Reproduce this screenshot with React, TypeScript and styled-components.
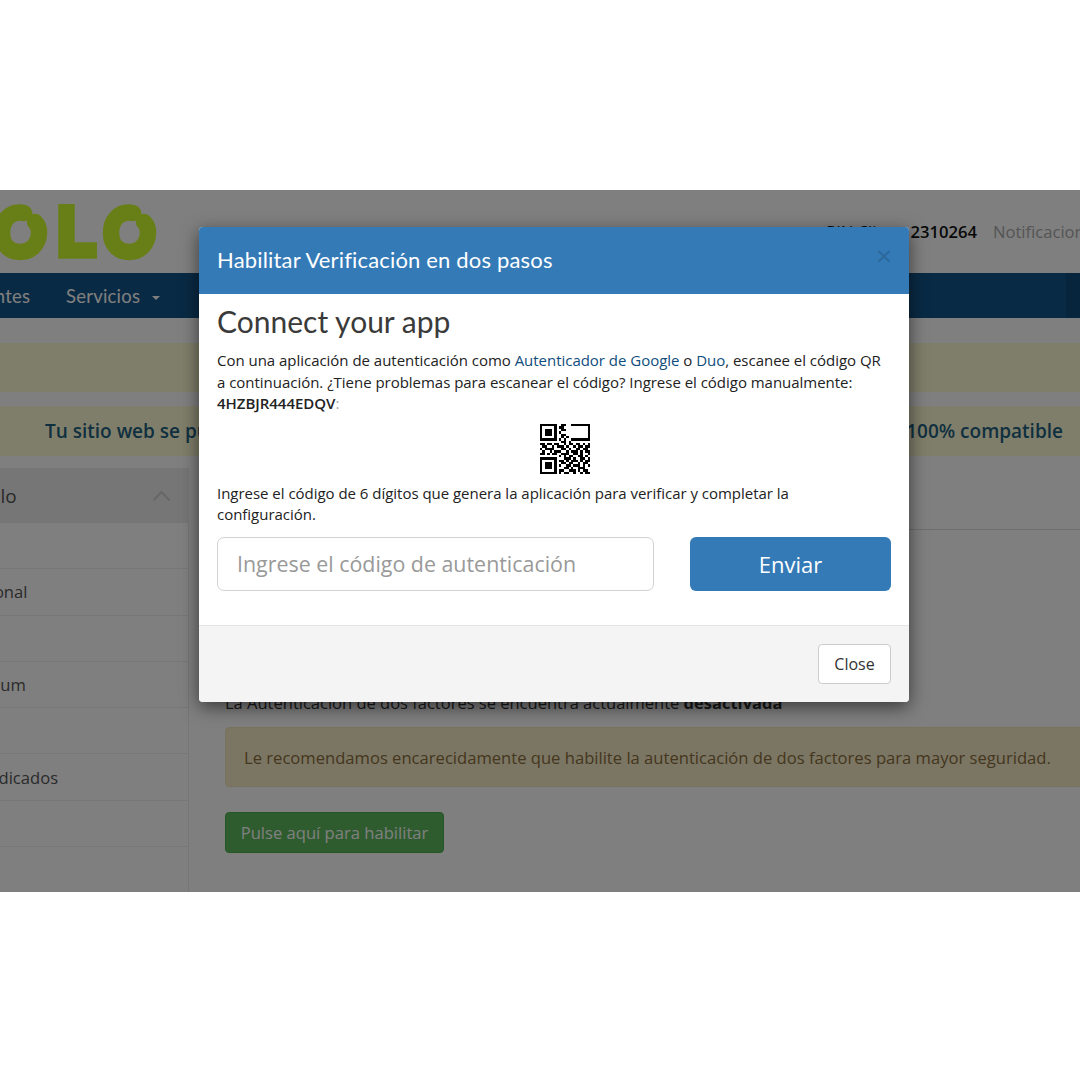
import React from "react";
import styled, { createGlobalStyle } from "styled-components";

const GlobalStyle = createGlobalStyle`
  html, body {
    margin: 0;
    padding: 0;
    background: #fff;
  }
  * {
    box-sizing: border-box;
  }
  body {
    font-family: "Open Sans", "Liberation Sans", sans-serif;
    color: #333;
    overflow: hidden;
  }
`;

const QR_ROWS = [
  "111111100110011111111",
  "100000101100000000001",
  "101110100110000000001",
  "101110101000000000001",
  "101110100110000000001",
  "100000100101000000001",
  "111111101010011111111",
  "000000000110100000000",
  "110110110010110110101",
  "011001011101001011011",
  "101111000110100110110",
  "010010111001011101011",
  "110101100111001101001",
  "000000001010110011010",
  "111111100011101001101",
  "100000101101011101011",
  "101110100110110010110",
  "101110101001101110101",
  "101110100011010011100",
  "100000101100111010110",
  "111111101011001001011",
];

const MENU = [
  "Mi Cuenta",
  "Servidor Personal",
  "Dominios",
  "Hosting Premium",
  "Correo",
  "Servidores Dedicados",
  "Soporte",
];

const Logo = () => (
  <LogoSvg viewBox="0 0 160 64" aria-label="Logo">
    <g fill="none" stroke="#d0ff30" strokeWidth="16.5" strokeLinecap="round">
      <path d="M24 13 C9 10 2 22 2 33 C2 46 11 52 20 52 C31 52 39 44 39 32 C39 27 37 24 35 22" />
      <path d="M66.5 4 V50.5 H97" strokeLinecap="butt" />
      <path d="M133 13 C118 10 111 22 111 33 C111 46 120 52 129 52 C140 52 148 44 148 32 C148 27 146 24 144 22" />
    </g>
  </LogoSvg>
);

const QrCode = () => (
  <QrSvg viewBox="0 0 21 21" shapeRendering="crispEdges" aria-label="QR">
    {QR_ROWS.map((row, y) =>
      row
        .split("")
        .map((cell, x) =>
          cell === "1" ? <rect key={`${x}-${y}`} x={x} y={y} width="1" height="1" fill="#000" /> : null
        )
    )}
  </QrSvg>
);

export default function App() {
  return (
    <>
      <GlobalStyle />
      <Frame>
        <Page>
          <Header>
            <Logo />
            <HeaderInfo>
              <PinLabel>
                PIN Client: <strong>2310264</strong>
              </PinLabel>
              <Muted>Notificaciones</Muted>
            </HeaderInfo>
          </Header>
          <Nav>
            <NavItem>Clientes</NavItem>
            <NavItem>
              Servicios <Caret />
            </NavItem>
            <NavEnd />
          </Nav>
          <EmptyBanner />
          <Banner>
            <span>Tu sitio web se puede</span>
            <span>100% compatible</span>
          </Banner>
          <Columns>
            <Sidebar>
              <SidebarHeader>
                <span>Panel del Colo</span>
                <Chevron viewBox="0 0 20 12">
                  <path d="M1.5 10.5 L10 2 L18.5 10.5" />
                </Chevron>
              </SidebarHeader>
              {MENU.map((item) => (
                <SidebarRow key={item}>{item}</SidebarRow>
              ))}
            </Sidebar>
            <Main>
              <MainTitle>Seguridad de la cuenta</MainTitle>
              <StatusText>
                La Autenticación de dos factores se encuentra actualmente <strong>desactivada</strong>
              </StatusText>
              <WarningBox>
                Le recomendamos encarecidamente que habilite la autenticación de dos factores para mayor seguridad.
              </WarningBox>
              <EnableButton>Pulse aquí para habilitar</EnableButton>
            </Main>
          </Columns>
        </Page>
        <Backdrop />
        <Modal>
          <ModalHeader>
            <ModalTitle>Habilitar Verificación en dos pasos</ModalTitle>
            <CloseX>×</CloseX>
          </ModalHeader>
          <ModalBody>
            <Heading>Connect your app</Heading>
            <Paragraph>
              Con una aplicación de autenticación como <BodyLink>Autenticador de Google</BodyLink> o{" "}
              <BodyLink>Duo</BodyLink>, escanee el código QR a continuación. ¿Tiene problemas para escanear el código?
              Ingrese el código manualmente: <Code>4HZBJR444EDQV</Code>
              <Faint>:</Faint>
            </Paragraph>
            <QrWrap>
              <QrCode />
            </QrWrap>
            <Paragraph>
              Ingrese el código de 6 dígitos que genera la aplicación para verificar y completar la configuración.
            </Paragraph>
            <CodeForm>
              <CodeInput placeholder="Ingrese el código de autenticación" />
              <SubmitButton>Enviar</SubmitButton>
            </CodeForm>
          </ModalBody>
          <ModalFooter>
            <CloseButton>Close</CloseButton>
          </ModalFooter>
        </Modal>
      </Frame>
    </>
  );
}

const Frame = styled.div`
  position: relative;
  height: 702px;
  margin-top: 190px;
  overflow: hidden;
  background: #fff;
`;

const Page = styled.div`
  width: 1320px;
  margin-left: -120px;
`;

const Header = styled.header`
  display: flex;
  align-items: center;
  justify-content: space-between;
  height: 83px;
  padding: 0 98px 0 120px;
`;

const LogoSvg = styled.svg`
  width: 160px;
  height: 64px;
  overflow: visible;
`;

const HeaderInfo = styled.div`
  display: flex;
  gap: 16px;
  font-size: 16.6px;
  color: #111;
`;

const PinLabel = styled.span`
  strong {
    font-weight: 600;
  }
`;

const Muted = styled.span`
  color: #aaa;
`;

const Nav = styled.nav`
  display: flex;
  align-items: center;
  gap: 36px;
  height: 45px;
  padding-left: 83px;
  background: #125488;
  position: relative;
`;

const NavItem = styled.span`
  font-family: Lato, "Open Sans", sans-serif;
  font-size: 18.5px;
  letter-spacing: 0.2px;
  color: #fff;
`;

const Caret = styled.i`
  display: inline-block;
  width: 0;
  height: 0;
  margin-left: 7px;
  vertical-align: middle;
  border-top: 4px solid #fff;
  border-left: 4.5px solid transparent;
  border-right: 4.5px solid transparent;
`;

const NavEnd = styled.div`
  position: absolute;
  top: 0;
  bottom: 0;
  left: 1186px;
  right: 0;
  background: #0f4d7d;
`;

const EmptyBanner = styled.div`
  height: 49px;
  margin-top: 25px;
  background: #fffdd4;
`;

const Banner = styled.div`
  display: flex;
  justify-content: space-between;
  align-items: center;
  height: 50px;
  margin-top: 14px;
  padding: 0 137px 0 165px;
  background: #fffdd4;
  color: #1f6080;
  font-size: 19px;
  font-weight: 600;
`;

const Columns = styled.div`
  display: flex;
  margin-top: 12px;
`;

const Sidebar = styled.aside`
  flex: 0 0 309px;
  height: 424px;
  border-right: 1px solid #ececec;
`;

const SidebarHeader = styled.div`
  display: flex;
  align-items: center;
  justify-content: space-between;
  height: 55px;
  padding: 0 17px 0 11px;
  background: #ececec;
  color: #555;
  font-size: 19px;
`;

const Chevron = styled.svg`
  width: 19px;
  height: 12px;
  fill: none;
  stroke: #ccc;
  stroke-width: 2;
`;

const SidebarRow = styled.div`
  display: flex;
  align-items: center;
  height: 46.3px;
  padding-left: 11px;
  border-bottom: 1px solid #eee;
  font-size: 16.6px;
  color: #555;
`;

const Main = styled.main`
  flex: 1;
  padding-left: 36px;
`;

const MainTitle = styled.h2`
  height: 62px;
  margin: 0;
  border-bottom: 1px solid #ddd;
  font-size: 24px;
  font-weight: 400;
`;

const StatusText = styled.p`
  margin: 162px 0 0;
  font-size: 16.5px;
  line-height: 22px;
  color: #333;
`;

const WarningBox = styled.div`
  display: flex;
  align-items: center;
  height: 60px;
  margin-top: 13px;
  padding-left: 18px;
  background: #f6ecc8;
  border: 1px solid #f0e4bc;
  border-radius: 4px;
  color: #8a6d3b;
  font-size: 16.6px;
`;

const EnableButton = styled.button`
  display: block;
  width: 219px;
  height: 41px;
  margin-top: 25px;
  padding: 0;
  border: 1px solid #4cae4c;
  border-radius: 4px;
  background: #5cb85c;
  color: #fff;
  font-family: inherit;
  font-size: 16.6px;
`;

const Backdrop = styled.div`
  position: absolute;
  inset: 0;
  background: rgba(0, 0, 0, 0.5);
`;

const Modal = styled.div`
  position: absolute;
  top: 37px;
  left: 199px;
  width: 710px;
  height: 475px;
  display: flex;
  flex-direction: column;
  border-radius: 4px;
  overflow: hidden;
  background: #fff;
  box-shadow: 0 5px 18px rgba(0, 0, 0, 0.55);
`;

const ModalHeader = styled.div`
  display: flex;
  align-items: center;
  justify-content: space-between;
  height: 67px;
  padding: 0 18px;
  background: #337ab7;
`;

const ModalTitle = styled.h4`
  margin: -2px 0 0;
  font-family: Lato, "Open Sans", sans-serif;
  font-size: 22px;
  letter-spacing: 0.17px;
  font-weight: 400;
  color: #fff;
`;

const CloseX = styled.span`
  margin: -12px -1px 0 0;
  font-size: 28px;
  line-height: 1;
  color: #2c689c;
`;

const ModalBody = styled.div`
  flex: 1;
  padding: 7px 18px 0;
`;

const Heading = styled.h2`
  margin: 0 0 9px;
  font-family: Lato, "Open Sans", sans-serif;
  font-size: 30px;
  line-height: 40px;
  font-weight: 400;
  color: #3a3a3a;
`;

const Paragraph = styled.p`
  margin: 0;
  font-size: 15px;
  letter-spacing: -0.025px;
  line-height: 21.5px;
  color: #222;
`;

const BodyLink = styled.a`
  color: #0f4d7d;
`;

const Code = styled.strong`
  font-weight: 600;
`;

const Faint = styled.span`
  color: #aaa;
`;

const QrWrap = styled.div`
  display: flex;
  justify-content: center;
  padding: 9px 0 9px 22px;
`;

const QrSvg = styled.svg`
  display: block;
  width: 50px;
  height: 50px;
`;

const CodeForm = styled.div`
  display: flex;
  justify-content: space-between;
  margin-top: 11px;
`;

const CodeInput = styled.input`
  width: 437px;
  height: 54px;
  padding: 0 19px;
  border: 1.5px solid #d2d2d2;
  border-radius: 7px;
  font-family: inherit;
  font-size: 21.4px;
  color: #333;
  &::placeholder {
    color: #999;
    opacity: 1;
  }
`;

const SubmitButton = styled.button`
  width: 201px;
  height: 54px;
  border: none;
  border-radius: 6px;
  background: #337ab7;
  color: #fff;
  font-family: inherit;
  font-size: 22px;
`;

const ModalFooter = styled.div`
  display: flex;
  justify-content: flex-end;
  align-items: center;
  height: 77px;
  padding: 0 18px;
  background: #f4f4f4;
  border-top: 1px solid #e5e5e5;
`;

const CloseButton = styled.button`
  width: 73px;
  height: 40px;
  border: 1px solid #ccc;
  border-radius: 4px;
  background: #fff;
  color: #333;
  font-family: inherit;
  font-size: 16px;
`;
